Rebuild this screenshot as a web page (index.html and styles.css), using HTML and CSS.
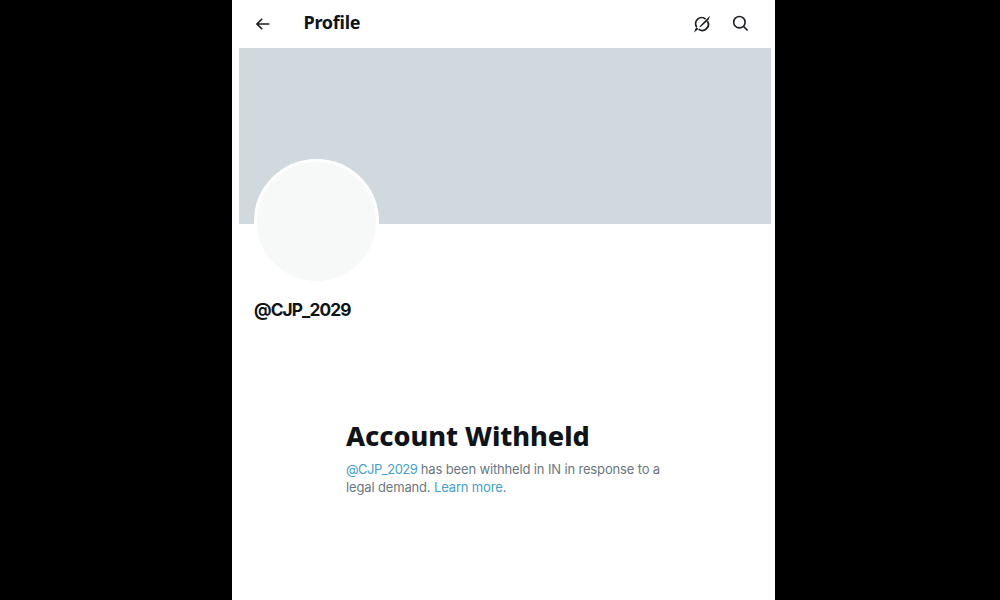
FILE: index.html
```html
<!DOCTYPE html>
<html lang="en">
<head>
<meta charset="utf-8">
<title>Profile</title>
<link rel="stylesheet" href="styles.css">
</head>
<body>
<main class="page">
  <header class="topbar">
    <svg class="back" width="14" height="14" viewBox="0 0 14 14"><path d="M13.3 7H1.2M6.2 1.8 1 7l5.2 5.2"/></svg>
    <h1 class="title">Profile</h1>
    <svg class="grok" width="18" height="18" viewBox="0 0 18 18"><path d="M12.6 4.1A6 6 0 0 0 3.7 12M5.6 14.1A6 6 0 0 0 14.4 6.2"/><path class="slash" d="M17.2.6 6.4 11.4l1.2.5L15.2 5.2ZM1 17.4l2.2-5.5 2.2 2Z"/></svg>
    <svg class="search" width="17" height="17" viewBox="0 0 17 17"><circle cx="7.4" cy="7.2" r="5.7"/><path d="m11.5 11.4 4.1 4.1"/></svg>
  </header>
  <div class="banner"></div>
  <section class="identity">
    <div class="avatar"></div>
    <h2 class="handle">@CJP_2029</h2>
  </section>
  <section class="notice">
    <h2 class="heading">Account Withheld</h2>
    <p class="line first"><a>@CJP_2029</a> has been withheld in IN in response to a</p>
    <p class="line second">legal demand. <a>Learn more</a>.</p>
  </section>
</main>
</body>
</html>
```
FILE: styles.css
```css
* { box-sizing: border-box; }
body {
  margin: 0;
  height: 600px;
  overflow: hidden;
  background: #000;
  font-family: "Noto Sans", sans-serif;
  color: #0f1419;
}
h1, h2, p { margin: 0; }
.page {
  width: 543px;
  height: 600px;
  margin-left: 232px;
  padding: 0 4px 0 7px;
  background: #fff;
}
.topbar {
  display: flex;
  align-items: center;
  height: 47.5px;
  padding: 0 22px 0 17px;
}
.topbar svg { fill: none; stroke: #1b1f23; stroke-width: 1.6; }
.topbar .grok { stroke-width: 1.8; }
.topbar .slash { fill: #1b1f23; stroke: none; }
.title {
  margin-left: 33.5px;
  font-size: 18px;
  line-height: 24px;
  font-weight: 700;
  letter-spacing: -0.25px;
  margin-top: -3px;
}
.grok { margin-left: auto; }
.search { margin-left: 21px; }
.banner { height: 176.5px; background: #cfd9de; }
.identity { height: 188px; padding-left: 15px; }
.avatar {
  width: 125px;
  height: 125px;
  margin-top: -65px;
  border: 3px solid #fff;
  border-radius: 50%;
  background: #f7f9f9;
  position: relative;
}
.handle {
  margin-top: 14px;
  font-family: Inter, sans-serif;
  font-size: 17.3px;
  line-height: 24px;
  font-weight: 700;
  letter-spacing: -0.88px;
}
.notice { padding: 65px 0 0 107px; white-space: nowrap; }
.heading {
  font-size: 27px;
  line-height: 34px;
  font-weight: 800;
  letter-spacing: -0.03px;
  margin-top: 7px;
}
.line {
  font-family: Inter, sans-serif;
  font-size: 13px;
  line-height: 18px;
  color: #6b7780;
  letter-spacing: -0.15px;
}
.first { margin-top: 7px; }
.line a { color: #439fd0; }
.first a { letter-spacing: -0.5px; }
```
